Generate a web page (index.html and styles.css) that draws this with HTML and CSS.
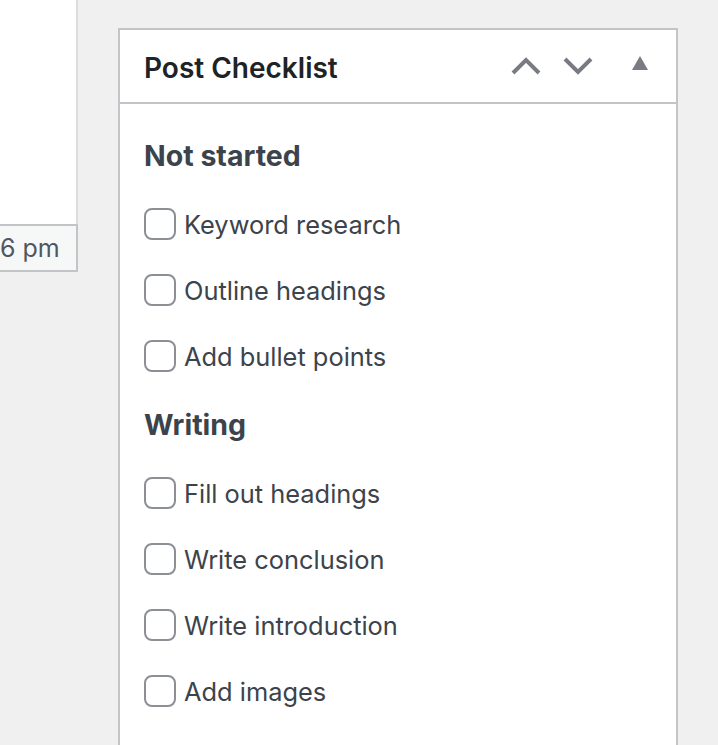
FILE: index.html
```html
<!DOCTYPE html>
<html lang="en">
<head>
    <meta charset="UTF-8">
    <meta name="viewport" content="width=device-width, initial-scale=1.0">
    <title>Post Checklist</title>
    <link rel="stylesheet" href="styles.css">
</head>
<body>
    <div class="side">
        <div class="side-body"></div>
        <div class="side-footer">6 pm</div>
    </div>

    <div class="postbox">
        <div class="postbox-header">
            <h2 class="title">Post Checklist</h2>
            <div class="handles">
                <button class="handle order" aria-label="Move up">
                    <svg width="30" height="18" viewBox="0 0 30 18"><polyline points="2,16 15,3 28,16" fill="none" stroke="#787c82" stroke-width="4"/></svg>
                </button>
                <button class="handle order" aria-label="Move down">
                    <svg width="30" height="18" viewBox="0 0 30 18"><polyline points="2,2 15,15 28,2" fill="none" stroke="#787c82" stroke-width="4"/></svg>
                </button>
                <button class="handle toggle" aria-label="Toggle panel">
                    <svg width="16" height="14" viewBox="0 0 16 14"><polygon points="8,0 16,14 0,14" fill="#787c82"/></svg>
                </button>
            </div>
        </div>
        <div class="inside">
            <h3 class="group">Not started</h3>
            <label class="item"><input type="checkbox"> Keyword research</label>
            <label class="item"><input type="checkbox"> Outline headings</label>
            <label class="item"><input type="checkbox"> Add bullet points</label>

            <h3 class="group">Writing</h3>
            <label class="item"><input type="checkbox"> Fill out headings</label>
            <label class="item"><input type="checkbox"> Write conclusion</label>
            <label class="item"><input type="checkbox"> Write introduction</label>
            <label class="item"><input type="checkbox"> Add images</label>
        </div>
    </div>
</body>
</html>
```

FILE: styles.css
```css
* {
    margin: 0;
    padding: 0;
    box-sizing: border-box;
}

body {
    display: flex;
    align-items: flex-start;
    gap: 40px;
    height: 745px;
    overflow: hidden;
    background-color: #f0f0f1;
    font-family: Inter, "Noto Sans", sans-serif;
    color: #3c434a;
}

.side {
    width: 78px;
}

.side-body {
    height: 224px;
    background-color: #fff;
    border-right: 2px solid #dcdcde;
}

.side-footer {
    height: 48px;
    background-color: #f6f7f7;
    border-top: 2px solid #c3c4c7;
    border-bottom: 2px solid #c3c4c7;
    border-right: 2px solid #c3c4c7;
    font-size: 25px;
    line-height: 44px;
    white-space: nowrap;
    overflow: hidden;
    color: #50575e;
}

.postbox {
    margin-top: 28px;
    width: 560px;
    background-color: #fff;
    border: 2px solid #c3c4c7;
    border-bottom: none;
    min-height: 800px;
}

.postbox-header {
    display: flex;
    align-items: center;
    justify-content: space-between;
    height: 74px;
    border-bottom: 2px solid #c3c4c7;
}

.title {
    padding: 3px 0 0 24px;
    font-size: 28px;
    font-weight: 600;
    color: #1d2327;
}

.handles {
    display: flex;
    height: 72px;
}

.handle {
    display: flex;
    align-items: center;
    justify-content: center;
    height: 72px;
    background: none;
    border: none;
    cursor: pointer;
}

.handle.order {
    width: 52px;
}

.handle.toggle {
    width: 72px;
    padding-bottom: 6px;
}

.inside {
    padding: 16px 24px 0;
}

.group {
    height: 71px;
    line-height: 71px;
    font-size: 28.5px;
    font-weight: 700;
    color: #3c434a;
}

.item {
    display: flex;
    align-items: center;
    gap: 8px;
    height: 66px;
    font-size: 25.4px;
    cursor: pointer;
}

.item input {
    appearance: none;
    width: 32px;
    height: 32px;
    border: 2px solid #8c8f94;
    border-radius: 8px;
    background-color: #fff;
    flex-shrink: 0;
}
```
